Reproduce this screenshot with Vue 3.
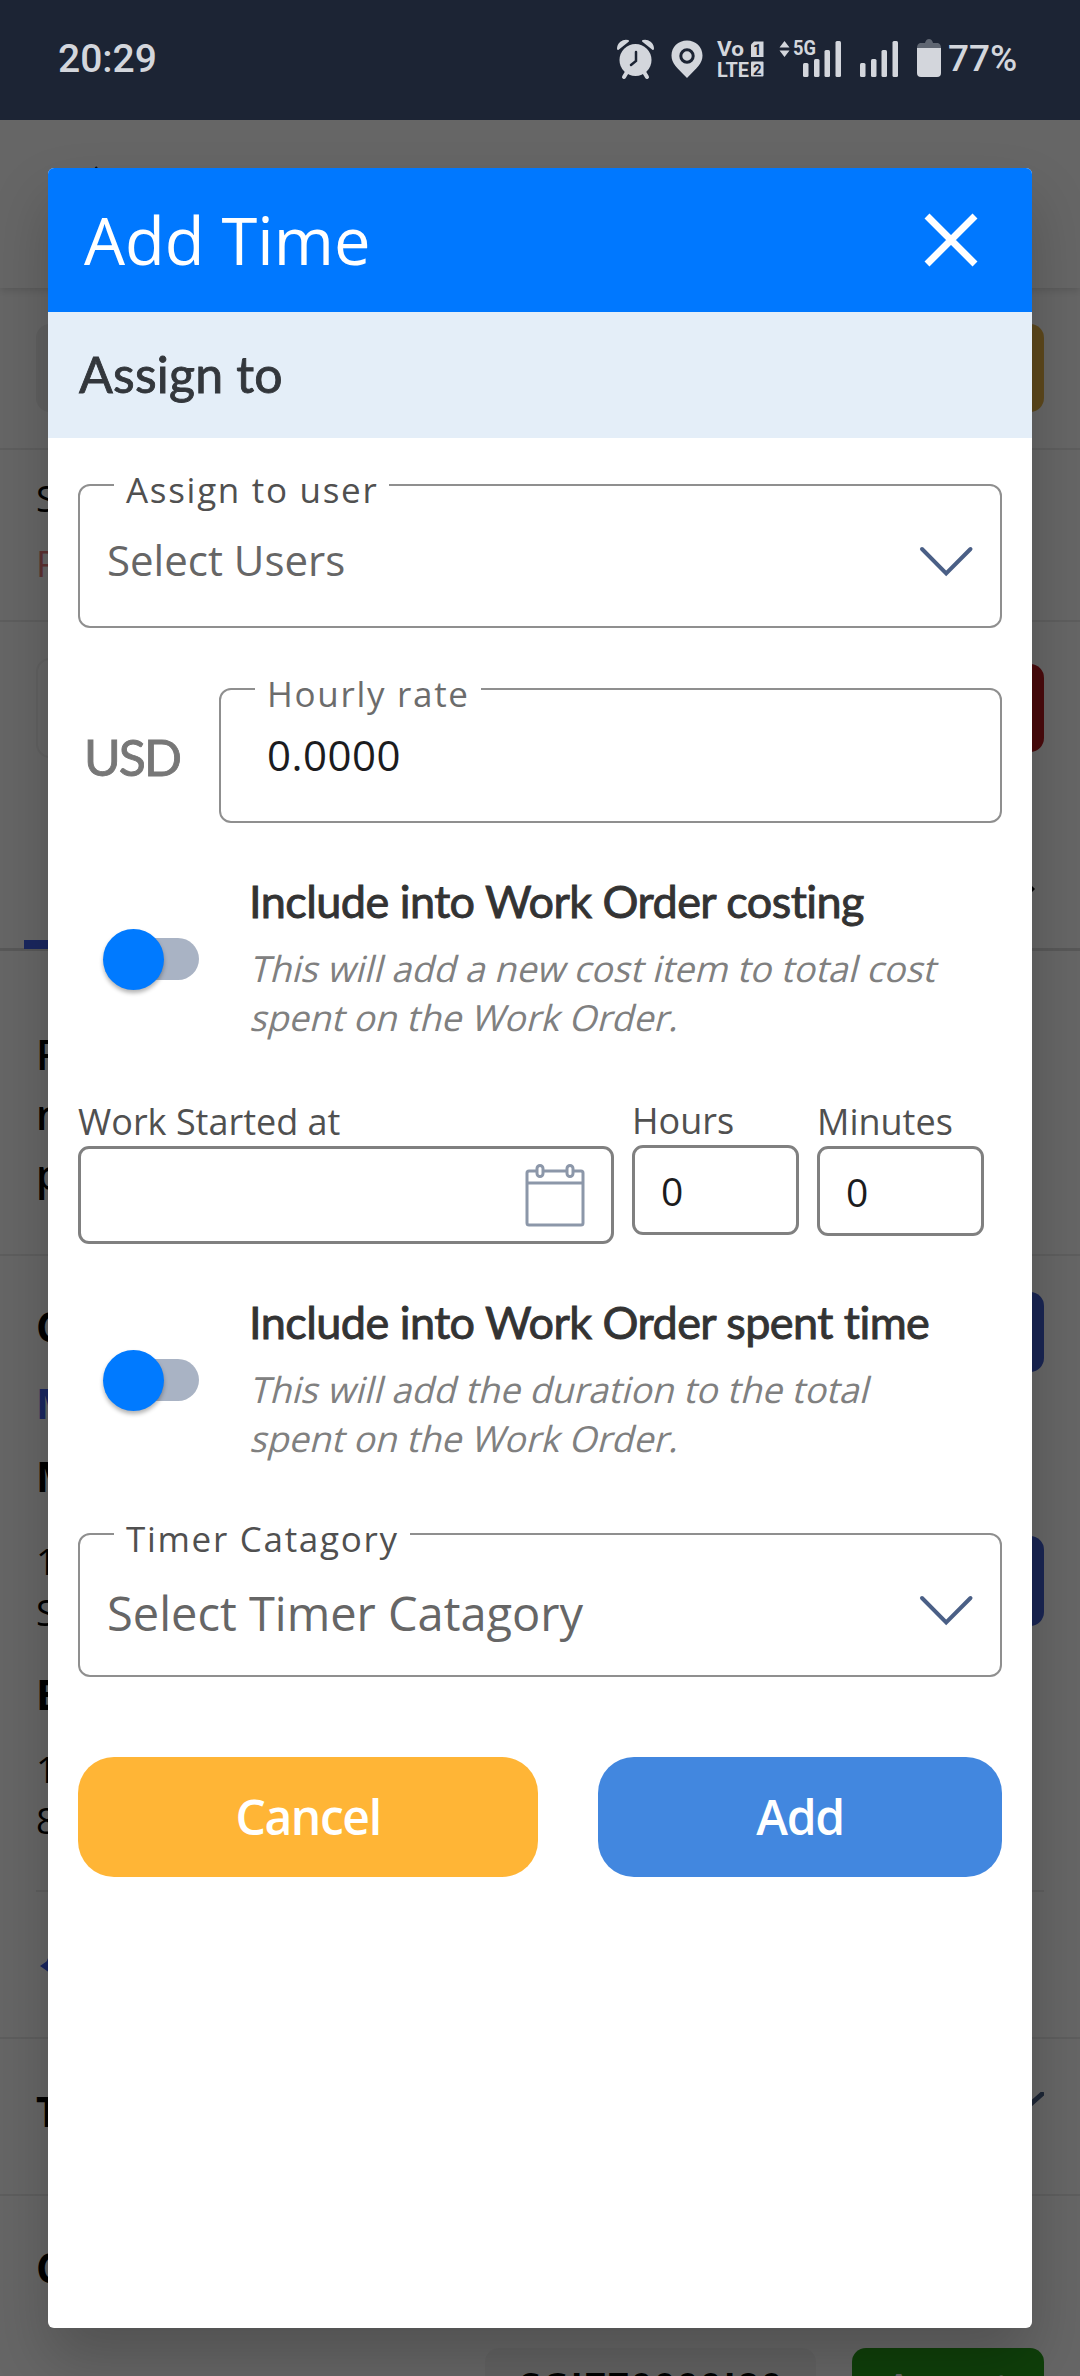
<script setup>
import { ref } from 'vue';

const rate = ref('0.0000');
const hours = ref('0');
const minutes = ref('0');
const includeCost = ref(false);
const includeTime = ref(false);
</script>

<template>
    <div class="screen">
        <!-- Status bar -->
        <div class="status-bar">
            <span class="clock">20:29</span>
            <svg class="status-icons" viewBox="0 0 310 50" width="310" height="50">
                <!-- alarm -->
                <path d="M2 14a8 8 0 0 1 10-8zM37 14a8 8 0 0 0-10-8z" stroke-width="2" stroke="#d3d6dc" stroke-linejoin="round" />
                <circle cx="19.500" cy="25" r="16" />
                <path d="M11 37l-3 5M28 37l3 5" fill="none" stroke="#d3d6dc" stroke-width="4" stroke-linecap="round" />
                <path d="M20 17v9l-5 4" fill="none" stroke="#1c2434" stroke-width="2.500" stroke-linecap="round" />
                <!-- location -->
                <path d="M71 5.500c-8.800 0-15.500 6.500-15.500 15 0 7.500 5 12 15.500 22.500 10.500-10.500 15.500-15 15.500-22.500 0-8.500-6.700-15-15.500-15z" />
                <circle cx="71" cy="21" r="6.200" fill="#d3d6dc" stroke="#1c2434" stroke-width="3" />
                <!-- VoLTE -->
                <text x="101" y="21" class="net" textLength="27" lengthAdjust="spacingAndGlyphs">Vo</text>
                <text x="101" y="41.500" class="net" textLength="32" lengthAdjust="spacingAndGlyphs">LTE</text>
                <path d="M138 6.500h9.500v15.500h-12.500V9.500z" />
                <rect x="135" y="26.500" width="12.500" height="15" rx="1" />
                <text x="141.200" y="20" class="sim">1</text>
                <text x="141.200" y="39.500" class="sim">2</text>
                <!-- 5G + signal -->
                <path d="M163.500 12.500l5-6.500 5 6.500zM163.500 15.500l5 6.500 5-6.500z" />
                <text x="177" y="20" class="net" textLength="23" lengthAdjust="spacingAndGlyphs">5G</text>
                <rect x="187" y="28" width="5.500" height="14" rx="1.500" />
                <rect x="198" y="24" width="5.500" height="18" rx="1.500" />
                <rect x="208.500" y="15" width="5.500" height="27" rx="1.500" />
                <rect x="219.500" y="6" width="5.500" height="36" rx="1.500" />
                <rect x="244" y="28" width="5.500" height="14" rx="1.500" />
                <rect x="255" y="24" width="5.500" height="18" rx="1.500" />
                <rect x="265.500" y="15" width="5.500" height="27" rx="1.500" />
                <rect x="276.500" y="6" width="5.500" height="36" rx="1.500" />
            </svg>
            <svg class="battery" viewBox="0 0 24 40" width="24" height="40">
                <path d="M3 4h5q1-4 4-4t4 4h5q3 1 3 5H0q0-4 3-5z" fill="#5f6672" />
                <path d="M0 9h24v25q0 4-4 4H4q-4 0-4-4z" fill="#d3d6dc" />
            </svg>
            <span class="percent">77%</span>
        </div>

        <!-- Work order page under the dialog -->
        <div class="page">
            <div class="appbar">
                <svg viewBox="0 0 40 40" width="40" height="40"><path d="M20 2L4 20l16 18M5 20h34" fill="none" stroke="#222" stroke-width="5" /></svg>
            </div>
            <div class="row row-search">
                <span class="pill gray"></span>
                <span class="pill yellow"></span>
            </div>
            <div class="row row-status">
                <p>S</p>
                <p class="pink">P</p>
            </div>
            <div class="row-tabs">
                <div class="tab-actions">
                    <span class="pill outlined"></span>
                    <span class="pill red"></span>
                </div>
                <svg class="more" viewBox="0 0 12 20" width="12" height="20"><path d="M0 0l10 10L0 20z" /></svg>
                <div class="tab-line"><i></i></div>
            </div>
            <div class="row row-title">
                <p>R</p>
                <p>n</p>
                <p>p</p>
            </div>
            <div class="row-contact">
                <div class="contact-text">
                    <p class="bold c1">C</p>
                    <p class="bold c2">M</p>
                    <p class="bold c3">M</p>
                    <p class="c4">1</p>
                    <p class="c5">S</p>
                    <p class="bold c6">B</p>
                    <p class="c7">1</p>
                    <p class="c8">8</p>
                </div>
                <div class="contact-actions">
                    <span class="pill blue"></span>
                    <span class="pill blue tall"></span>
                </div>
            </div>
            <div class="row row-reply">
                <svg viewBox="0 0 30 30" width="30" height="30"><path d="M0 16l10-7v14z" /><path d="M9 16q-1-11 14-12" fill="none" stroke="#4361ee" stroke-width="5" /></svg>
            </div>
            <div class="row row-section">
                <p class="bold">T</p>
                <svg viewBox="0 0 40 22" width="40" height="22"><path d="M2 2l18 16L38 2" fill="none" stroke="#4a5f86" stroke-width="5" stroke-linecap="round" /></svg>
            </div>
            <div class="row-last">
                <p class="bold">C</p>
                <div class="last-actions">
                    <span class="code">CGI770000I80</span>
                    <span class="accept">Accept</span>
                </div>
            </div>
        </div>

        <div class="scrim">
            <div class="modal">
                <div class="modal-header">
                    <h1>Add Time</h1>
                    <button class="btn-close" title="Close">
                        <svg viewBox="0 0 54 54" width="54" height="54"><path d="M3 3l48 48M51 3L3 51" fill="none" stroke="#fff" stroke-width="7" /></svg>
                    </button>
                </div>
                <div class="band">Assign to</div>

                <div class="modal-body">
                    <div class="field select">
                        <span class="float-label">Assign to user</span>
                        <span class="placeholder">Select Users</span>
                        <svg class="chevron" viewBox="0 0 56 32" width="56" height="32"><path d="M4 3l24.200 24.500L52.500 3" /></svg>
                    </div>

                    <div class="rate-row">
                        <span class="currency">USD</span>
                        <div class="field rate">
                            <span class="float-label light">Hourly rate</span>
                            <span class="value">{{ rate }}</span>
                        </div>
                    </div>

                    <div class="toggle-row">
                        <button class="toggle" @click="includeCost = !includeCost"><i></i></button>
                        <div>
                            <h2>Include into Work Order costing</h2>
                            <p class="hint">
                                <span>This will add a new cost item to total cost</span>
                                <span>spent on the Work Order.</span>
                            </p>
                        </div>
                    </div>

                    <div class="time-row">
                        <div class="col date">
                            <label>Work Started at</label>
                            <div class="box">
                                <svg class="calendar" viewBox="0 0 60 64" width="60" height="64">
                                    <path d="M12 8H4q-2 0-2 2v50q0 2 2 2h52q2 0 2-2V10q0-2-2-2h-8M18 8h24M2 20h56" />
                                    <rect x="12" y="2.500" width="6" height="11" rx="3" />
                                    <rect x="42" y="2.500" width="6" height="11" rx="3" />
                                </svg>
                            </div>
                        </div>
                        <div class="col hours">
                            <label>Hours</label>
                            <div class="box">{{ hours }}</div>
                        </div>
                        <div class="col">
                            <label>Minutes</label>
                            <div class="box">{{ minutes }}</div>
                        </div>
                    </div>

                    <div class="toggle-row">
                        <button class="toggle" @click="includeTime = !includeTime"><i></i></button>
                        <div>
                            <h2>Include into Work Order spent time</h2>
                            <p class="hint">
                                <span>This will add the duration to the total</span>
                                <span>spent on the Work Order.</span>
                            </p>
                        </div>
                    </div>

                    <div class="field select category">
                        <span class="float-label">Timer Catagory</span>
                        <span class="placeholder">Select Timer Catagory</span>
                        <svg class="chevron" viewBox="0 0 56 32" width="56" height="32"><path d="M4 3l24.200 24.500L52.500 3" /></svg>
                    </div>

                    <div class="actions">
                        <button class="btn-cancel">Cancel</button>
                        <button class="btn-add">Add</button>
                    </div>
                </div>
            </div>
        </div>
    </div>
</template>

<style>
body {
    margin: 0;
    background: #666;
}
</style>

<style scoped>
* {
    box-sizing: border-box;
}

h1, h2, p {
    margin: 0;
    font-weight: 400;
}

button {
    border: none;
    padding: 0;
    background: transparent;
    font-family: inherit;
}

.screen {
    position: relative;
    width: 1080px;
    height: 2376px;
    overflow: hidden;
    font-family: 'Open Sans', 'Noto Sans', sans-serif;
    display: flex;
    flex-direction: column;
}

/* status bar */
.status-bar {
    height: 120px;
    flex: none;
    background: #1c2434;
    display: flex;
    align-items: flex-start;
    padding: 35px 64px 0 58px;
    color: #d3d6dc;
    font-family: Roboto, sans-serif;
    position: relative;
    z-index: 3;
}

.clock {
    font-size: 39px;
    line-height: 48px;
    font-weight: 500;
    margin-right: auto;
}

.status-icons {
    fill: #d3d6dc;
    margin-right: -9px;
}

.net {
    font-size: 21px;
    font-weight: 700;
}

.sim {
    font-size: 15px;
    font-weight: 700;
    fill: #1c2434;
    text-anchor: middle;
}

.battery {
    margin: 4px 7px 0 0;
}

.percent {
    font-size: 37px;
    line-height: 48px;
    font-weight: 500;
    width: 68px;
    white-space: nowrap;
}

/* page behind */
.page {
    height: 2256px;
    background: #fff;
    font-size: 37px;
    color: #000;
    display: flex;
    flex-direction: column;
}

.page > div {
    flex: none;
}

.page p {
    line-height: 60px;
}

.page .bold {
    font-weight: 700;
    font-size: 41px;
}

.appbar {
    height: 168px;
    padding: 46px 0 0 78px;
    box-shadow: 0 2px 8px rgba(0, 0, 0, 0.15);
}

.row {
    padding: 0 36px;
    border-bottom: 2px solid #ebebeb;
}

.row-search {
    height: 162px;
    padding-top: 36px;
    display: flex;
    justify-content: space-between;
}

.pill {
    width: 200px;
    height: 88px;
    border-radius: 14px;
}

.pill.gray { background: #f0f0f0; }
.pill.yellow { background: #e8b548; }
.pill.outlined { height: 100px; border: 2px solid #f2f2f2; }
.pill.red { background: #b8191f; margin-top: 6px; }
.pill.blue { background: #3f5cd0; height: 80px; }
.pill.blue.tall { height: 90px; margin-top: 164px; }

.row-status {
    height: 172px;
    padding-top: 18px;
    line-height: 60px;
}

.row-status .pink {
    color: #e87a7a;
    margin-top: 5px;
}

.row-tabs {
    height: 330px;
    padding-top: 36px;
}

.tab-actions {
    display: flex;
    justify-content: space-between;
    padding: 0 36px;
    height: 100px;
}

.more {
    display: block;
    margin: 121px 43px 0 auto;
}

.tab-line {
    margin-top: 41px;
    height: 11px;
    border-bottom: 3px solid #ddd;
}

.tab-line i {
    display: block;
    width: 200px;
    height: 9px;
    margin-left: 24px;
    background: #4361ee;
}

.row-title {
    height: 304px;
    padding-top: 72px;
    font-size: 41px;
}

.row-title p {
    font-weight: 600;
}

.row-contact {
    height: 636px;
    display: flex;
    justify-content: space-between;
    margin: 0 36px;
    border-bottom: 2px solid #ebebeb;
}

.c1 { margin-top: 40px; }
.page .c2 { color: #4361ee; margin-top: 17px; }
.c3 { margin-top: 13px; }
.c4 { margin-top: 25px; }
.c5 { margin-top: -9px; }
.c6 { margin-top: 22px; }
.c7 { margin-top: 15px; }
.c8 { margin-top: -9px; }

.contact-actions {
    padding-top: 36px;
    display: flex;
    flex-direction: column;
}

.row-reply {
    height: 147px;
    padding: 58px 40px 0;
}

.row-reply svg {
    display: block;
    fill: #4361ee;
}

.row-section {
    height: 157px;
    padding-top: 42px;
    display: flex;
    justify-content: space-between;
}

.row-section svg {
    margin-top: 11px;
}

.row-last {
    padding: 41px 36px 0;
    height: 179px;
}

.last-actions {
    display: flex;
    justify-content: flex-end;
    gap: 36px;
    margin-top: 51px;
    height: 90px;
}

.code {
    width: 331px;
    border-radius: 14px;
    background: #f6f6f6;
    font-size: 36px;
    font-weight: 700;
    line-height: 76px;
    letter-spacing: 2.5px;
    text-align: center;
    white-space: nowrap;
}

.accept {
    width: 192px;
    border-radius: 14px;
    background: #279f19;
    color: #fff;
    font-size: 38px;
    font-weight: 600;
    line-height: 76px;
    text-align: center;
}

/* dialog */
.scrim {
    position: absolute;
    inset: 120px 0 0 0;
    z-index: 2;
    background: rgba(0, 0, 0, 0.6);
    padding: 48px;
}

.modal {
    height: 2160px;
    background: #fff;
    border-radius: 6px;
    overflow: hidden;
    box-shadow: 0 32px 60px rgba(0, 0, 0, 0.2);
}

.modal-header {
    height: 144px;
    background: #0078ff;
    display: flex;
    justify-content: space-between;
    align-items: center;
    padding: 0 54px 0 36px;
}

.modal-header h1 {
    color: #fff;
    font-size: 65px;
    line-height: 90px;
}

.btn-close svg {
    display: block;
}

.band {
    height: 126px;
    line-height: 124px;
    background: #e4eef8;
    padding-left: 31px;
    color: #33373c;
    font-family: Lato, 'Noto Sans', sans-serif;
    font-size: 50px;
    letter-spacing: 0.2px;
    -webkit-text-stroke: 0.9px #33373c;
}

.modal-body {
    padding: 46px 30px 0;
}

.field {
    position: relative;
    border: 2px solid #8f8f8f;
    border-radius: 12px;
}

.field.select {
    height: 144px;
    display: flex;
    justify-content: space-between;
    padding: 0 26px 0 27px;
}

.float-label {
    position: absolute;
    top: -18px;
    left: 34px;
    padding: 0 11px 0 12px;
    background: #fff;
    font-size: 35px;
    line-height: 44px;
    letter-spacing: 1.7px;
    color: #505050;
    white-space: nowrap;
}

.float-label.light {
    color: #6c6c6c;
}

.placeholder {
    font-size: 42px;
    line-height: 60px;
    margin-top: 44px;
    color: #666;
}

.chevron {
    margin-top: 60px;
    fill: none;
    stroke: #4a5f86;
    stroke-width: 4;
    stroke-linecap: round;
}

.rate-row {
    margin-top: 60px;
    height: 135px;
    display: flex;
}

.currency {
    width: 141px;
    padding-left: 6px;
    line-height: 139px;
    color: #777;
    font-family: Lato, 'Noto Sans', sans-serif;
    font-size: 50px;
    letter-spacing: -2px;
    -webkit-text-stroke: 0.9px #777;
}

.field.rate {
    flex: 1;
    padding: 35px 0 0 46px;
}

.value {
    font-size: 42px;
    line-height: 60px;
    letter-spacing: 0.5px;
    color: #1c1c1e;
}

.toggle-row {
    margin-top: 47px;
    height: 172px;
    display: flex;
}

.toggle {
    width: 90px;
    height: 42px;
    margin: 68px 50px 0 31px;
    border-radius: 21px;
    background: #a9b3c4;
    display: flex;
    align-items: center;
}

.toggle i {
    flex: none;
    width: 61px;
    height: 61px;
    margin-left: -6px;
    border-radius: 50%;
    background: #007aff;
    box-shadow: 0 3px 4px rgba(0, 0, 0, 0.3);
}

h2 {
    padding-top: 1px;
    font-family: Lato, 'Noto Sans', sans-serif;
    font-size: 45px;
    line-height: 60px;
    color: #333;
    letter-spacing: -0.55px;
    -webkit-text-stroke: 0.9px #333;
    white-space: nowrap;
}

.hint {
    margin-top: 13px;
    font-size: 36px;
    line-height: 49px;
    color: #808080;
    white-space: nowrap;
}

/* slanted regular face, wider than the real italic */
.hint span {
    display: block;
    transform: skewX(-14deg);
    transform-origin: 0 78%;
}

.time-row {
    margin-top: 57px;
    display: grid;
    grid-template-columns: 536px 167px 167px;
    column-gap: 18px;
    align-items: start;
}

.col.hours {
    margin-top: -1px;
}

.time-row label {
    display: block;
    font-size: 36px;
    line-height: 46px;
    margin-bottom: 1px;
    color: #505050;
}

.box {
    height: 90px;
    border: 3px solid #808080;
    border-radius: 11px;
    padding-left: 26px;
    font-size: 39px;
    line-height: 85px;
    color: #1c1c1e;
}

.date .box {
    height: 98px;
    display: flex;
    justify-content: flex-end;
    padding: 14px 26px 0 0;
}

.calendar {
    fill: none;
    stroke: #8c97a9;
    stroke-width: 3;
}

.calendar rect {
    fill: #fff;
}

.field.category {
    margin-top: 70px;
}

.category .placeholder {
    font-size: 47px;
    margin-top: 48px;
}

.actions {
    margin-top: 80px;
    display: grid;
    grid-template-columns: 460px 404px;
    gap: 60px;
}

.actions button {
    height: 120px;
    padding-bottom: 1px;
    border-radius: 36px;
    color: #fff;
    font-size: 48px;
    font-weight: 600;
    letter-spacing: -1.4px;
}

.btn-cancel { background: #ffb536; }
.btn-add { background: #4287df; }
</style>
